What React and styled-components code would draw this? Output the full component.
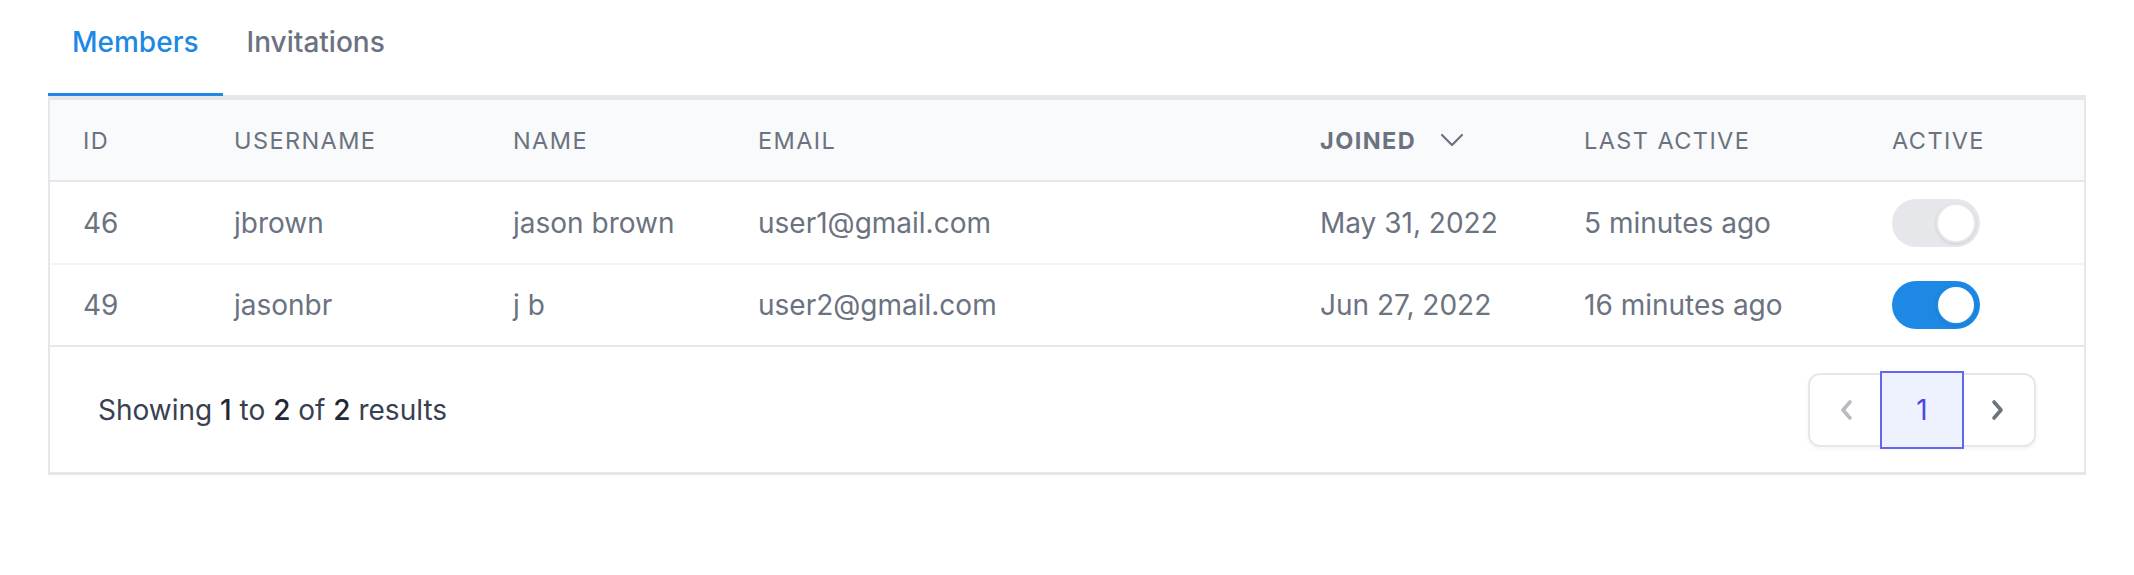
import React from "react";
import styled, { createGlobalStyle } from "styled-components";

const Global = createGlobalStyle`
  html, body { margin: 0; padding: 0; background: #ffffff; }
  body { font-family: Inter, "Noto Sans", sans-serif; -webkit-font-smoothing: antialiased; }
`;

const Page = styled.div`
  padding: 0 48px;
  width: 2134px;
  box-sizing: border-box;
`;

const TabBar = styled.div`
  display: flex;
`;

const Tab = styled.div`
  padding: 24px 24px 33px;
  line-height: 36px;
  font-size: 28px;
  font-weight: 500;
  color: ${(p) => (p.$active ? "#1e88e5" : "#6b7280")};
  border-bottom: 3px solid ${(p) => (p.$active ? "#1e88e5" : "transparent")};
  margin-bottom: -1px;
  position: relative;
  z-index: 1;
`;

const Card = styled.div`
  border: 2px solid #e5e7eb;
  border-top-width: 5px;
  border-bottom-width: 3px;
  background: #fff;
`;

const cols = "151px 279px 245px 562px 264px 308px 1fr";

const HeaderRow = styled.div`
  display: grid;
  grid-template-columns: ${cols};
  height: 80px;
  align-items: center;
  background: #f9fafb;
  border-bottom: 2px solid #e5e7eb;
`;

const HeadCell = styled.div`
  padding-left: 33px;
  display: flex;
  align-items: center;
  gap: 25px;
  font-size: 23.5px;
  letter-spacing: 0.06em;
  text-transform: uppercase;
  color: #6b7280;
  font-weight: ${(p) => (p.$sorted ? 700 : 400)};
`;

const Row = styled.div`
  display: grid;
  grid-template-columns: ${cols};
  height: ${(p) => p.$h}px;
  align-items: center;
  border-bottom: 2px solid ${(p) => (p.$last ? "#e5e7eb" : "#f3f4f6")};
`;

const Cell = styled.div`
  padding-left: 33px;
  font-size: 28px;
  color: #6b7280;
  white-space: nowrap;
`;

const Toggle = styled.div`
  position: relative;
  width: 88px;
  height: 48px;
  border-radius: 24px;
  background: ${(p) => (p.$on ? "#1e88e5" : "#e5e7eb")};
`;

const Knob = styled.div`
  position: absolute;
  top: 4px;
  right: 4px;
  width: 40px;
  height: 40px;
  box-sizing: border-box;
  border-radius: 50%;
  background: #fff;
  border: 2px solid ${(p) => (p.$on ? "#1e88e5" : "#e5e7eb")};
  box-shadow: 0 1px 3px rgba(0, 0, 0, 0.12);
`;

const Footer = styled.div`
  height: 125px;
  padding: 0 48px;
  display: flex;
  align-items: center;
  justify-content: space-between;
`;

const Summary = styled.div`
  font-size: 28px;
  color: #374151;
  b { font-weight: 500; color: #1f2937; }
`;

const Pager = styled.div`
  display: flex;
  height: 74px;
  box-sizing: border-box;
  border: 2px solid #e5e7eb;
  border-radius: 12px;
  box-shadow: 0 2px 4px rgba(0, 0, 0, 0.05);
`;

const PagerButton = styled.div`
  width: ${(p) => p.$w}px;
  display: flex;
  align-items: center;
  justify-content: center;
  box-sizing: border-box;
  font-size: 28px;
  color: ${(p) => p.$color || "#6b7280"};
  ${(p) =>
    p.$current &&
    `
    background: #eef2ff;
    outline: 2px solid #6366f1;
    outline-offset: 0;
    margin: -2px 0;
    height: 74px;
    color: #4f46e5;
  `}
`;

const Chevron = ({ dir, color }) => (
  <svg width="14" height="22" viewBox="0 0 14 22" fill="none">
    <polyline
      points={dir === "left" ? "11,3 4,11 11,19" : "3,3 10,11 3,19"}
      stroke={color}
      strokeWidth="3.6"
      strokeLinecap="round"
      strokeLinejoin="round"
    />
  </svg>
);

const SortIcon = () => (
  <svg width="22" height="12" viewBox="0 0 22 12" fill="none">
    <polyline points="1,1 11,11 21,1" stroke="#6b7280" strokeWidth="2.2" strokeLinecap="round" strokeLinejoin="round" />
  </svg>
);

const rows = [
  { id: 46, username: "jbrown", name: "jason brown", email: "user1@gmail.com", joined: "May 31, 2022", last: "5 minutes ago", active: false },
  { id: 49, username: "jasonbr", name: "j b", email: "user2@gmail.com", joined: "Jun 27, 2022", last: "16 minutes ago", active: true },
];

export default function App() {
  return (
    <>
      <Global />
      <Page>
        <TabBar>
          <Tab $active>Members</Tab>
          <Tab>Invitations</Tab>
        </TabBar>
        <Card>
          <HeaderRow>
            <HeadCell>ID</HeadCell>
            <HeadCell>Username</HeadCell>
            <HeadCell>Name</HeadCell>
            <HeadCell>Email</HeadCell>
            <HeadCell $sorted>
              Joined <SortIcon />
            </HeadCell>
            <HeadCell>Last Active</HeadCell>
            <HeadCell>Active</HeadCell>
          </HeaderRow>
          {rows.map((r, i) => (
            <Row key={r.id} $h={i === 0 ? 81 : 80} $last={i === rows.length - 1}>
              <Cell>{r.id}</Cell>
              <Cell>{r.username}</Cell>
              <Cell>{r.name}</Cell>
              <Cell>{r.email}</Cell>
              <Cell>{r.joined}</Cell>
              <Cell>{r.last}</Cell>
              <Cell>
                <Toggle $on={r.active}>
                  <Knob $on={r.active} />
                </Toggle>
              </Cell>
            </Row>
          ))}
          <Footer>
            <Summary>
              Showing <b>1</b> to <b>2</b> of <b>2</b> results
            </Summary>
            <Pager>
              <PagerButton $w={72}>
                <Chevron dir="left" color="#b8bbc2" />
              </PagerButton>
              <PagerButton $w={80} $current>
                1
              </PagerButton>
              <PagerButton $w={72}>
                <Chevron dir="right" color="#6b7280" />
              </PagerButton>
            </Pager>
          </Footer>
        </Card>
      </Page>
    </>
  );
}
